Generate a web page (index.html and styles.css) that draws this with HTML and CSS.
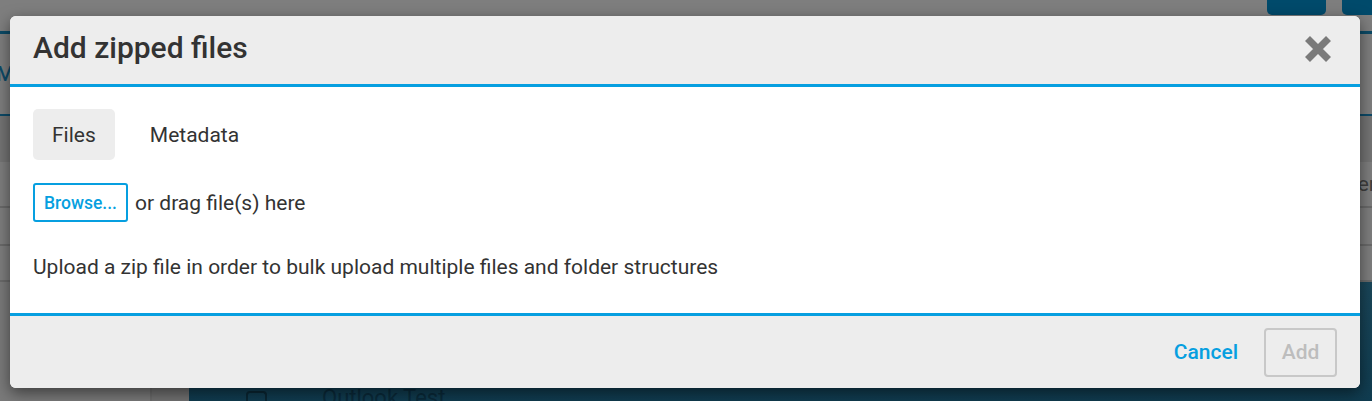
FILE: index.html
```html
<!DOCTYPE html>
<html lang="en">
<head>
<meta charset="utf-8">
<title>Add zipped files</title>
<link rel="stylesheet" href="styles.css">
</head>
<body>
<div class="app">
  <div class="app-top">
    <span class="app-btn app-btn-a"></span>
    <span class="app-btn app-btn-b"></span>
  </div>
  <div class="app-rule"></div>
  <div class="app-tabs"><span class="app-tab">My</span></div>
  <div class="app-line"></div>
  <div class="app-band"></div>
  <div class="app-row"><span class="app-row-text">er</span></div>
  <div class="app-row app-row-b"></div>
  <div class="app-row app-row-c"></div>
  <div class="app-bottom">
    <div class="col-a"></div>
    <div class="col-b"></div>
    <div class="col-c"></div>
    <div class="col-main"><span class="doc-icon"></span><span class="doc-name">Outlook Test</span></div>
  </div>
</div>

<div class="modal" role="dialog" aria-labelledby="modal-title">
  <header class="modal-header">
    <h1 id="modal-title" class="modal-title">Add zipped files</h1>
    <button class="close-btn" aria-label="Close">
      <svg width="26" height="26" viewBox="0 0 26 26" aria-hidden="true">
        <path d="M2.5 2.5 L23.5 23.5 M23.5 2.5 L2.5 23.5" stroke="#7a7a7a" stroke-width="7" stroke-linecap="butt" fill="none"/>
      </svg>
    </button>
  </header>
  <section class="modal-body">
    <nav class="tabs">
      <span class="tab tab-active">Files</span>
      <span class="tab">Metadata</span>
    </nav>
    <div class="drop-row">
      <button class="browse-btn">Browse...</button>
      <span class="drop-text">or drag file(s) here</span>
    </div>
    <p class="hint">Upload a zip file in order to bulk upload multiple files and folder structures</p>
  </section>
  <footer class="modal-footer">
    <button class="cancel-btn">Cancel</button>
    <button class="add-btn" disabled>Add</button>
  </footer>
</div>
</body>
</html>
```

FILE: styles.css
```css
* { box-sizing: border-box; }

html, body {
  margin: 0;
  padding: 0;
  width: 1372px;
  height: 401px;
  overflow: hidden;
}

body {
  background: #7e7e7e;
  font-family: Roboto, "Liberation Sans", sans-serif;
  color: #333;
  position: relative;
}

/* dimmed application behind the dialog */
.app {
  display: flex;
  flex-direction: column;
  height: 401px;
}
.app-top {
  height: 31px;
  display: flex;
  justify-content: flex-end;
  align-items: flex-start;
  gap: 16px;
}
.app-btn {
  display: block;
  height: 15px;
  background: #004a6b;
  border-radius: 0 0 5px 5px;
}
.app-btn-a { width: 59px; }
.app-btn-b { width: 34px; margin-right: -4px; }
.app-rule {
  height: 3px;
  background: #0b4a66;
}
.app-tabs {
  height: 80px;
  display: flex;
  align-items: center;
}
.app-tab {
  margin-left: -4px;
  font-size: 21px;
  font-weight: 500;
  color: #0d4a68;
}
.app-line {
  height: 2px;
  background: #0d4a68;
}
.app-band {
  height: 46px;
  background: #747474;
}
.app-row {
  height: 46px;
  border-bottom: 2px solid #6a6a6a;
  display: flex;
  align-items: center;
  justify-content: flex-end;
}
.app-row-text {
  font-size: 21px;
  color: #3e3e3e;
  margin-right: -4px;
}
.app-row-b { height: 38px; }
.app-row-c { height: 36px; }
.app-bottom {
  flex: 1;
  display: flex;
}
.col-a { width: 150px; background: #7a7a7a; }
.col-b { width: 2px; background: #6c6c6c; }
.col-c { width: 37px; background: #727272; }
.col-main {
  flex: 1;
  background: linear-gradient(#1a4659, #103c50);
  display: flex;
  align-items: flex-end;
  padding-left: 57px;
  gap: 55px;
  overflow: hidden;
}
.doc-icon {
  width: 21px;
  height: 14px;
  margin-bottom: -4px;
  border: 2px solid #0a2734;
  border-bottom: none;
  border-radius: 4px 4px 0 0;
}
.doc-name {
  font-size: 22px;
  color: #0a2a3a;
  line-height: 1;
  margin-bottom: -8px;
}

/* dialog */
.modal {
  position: absolute;
  left: 10px;
  top: 16px;
  width: 1350px;
  background: #fff;
  border-radius: 6px;
  box-shadow: 0 5px 15px rgba(0, 0, 0, 0.5);
  overflow: hidden;
}
.modal-header {
  height: 71px;
  background: #ededed;
  border-bottom: 3px solid #069fe0;
  display: flex;
  align-items: center;
  justify-content: space-between;
  padding: 0 29px 0 23px;
}
.modal-title {
  margin: 0;
  font-size: 30px;
  font-weight: 500;
  color: #333;
  line-height: 1;
  padding-bottom: 4px;
}
.close-btn {
  border: 0;
  padding: 0;
  background: none;
  width: 26px;
  height: 26px;
  display: block;
  margin-top: -3px;
}
.close-btn svg { display: block; }

.modal-body {
  padding: 22px 23px 33px;
}
.tabs {
  display: flex;
  gap: 16px;
}
.tab {
  height: 51px;
  padding: 0 19px;
  display: flex;
  align-items: center;
  font-size: 21px;
  color: #333;
  border-radius: 5px;
}
.tab-active { background: #ededed; }

.drop-row {
  margin-top: 23px;
  display: flex;
  align-items: center;
  gap: 7px;
}
.browse-btn {
  height: 39px;
  width: 95px;
  border: 2px solid #069fe0;
  border-radius: 3px;
  background: #fff;
  color: #069fe0;
  font-family: Roboto, "Liberation Sans", sans-serif;
  font-size: 17.5px;
  font-weight: 500;
  padding: 0;
}
.drop-text {
  font-size: 21px;
  color: #333;
}
.hint {
  margin: 33px 0 0;
  font-size: 21px;
  line-height: 25px;
  color: #333;
}

.modal-footer {
  height: 75px;
  background: #ededed;
  border-top: 3px solid #069fe0;
  display: flex;
  justify-content: flex-end;
  align-items: center;
  padding: 0 23px 0 0;
  gap: 26px;
}
.cancel-btn {
  border: 0;
  background: none;
  padding: 0;
  font-family: Roboto, "Liberation Sans", sans-serif;
  font-size: 21px;
  font-weight: 500;
  color: #069fe0;
}
.add-btn {
  width: 73px;
  height: 49px;
  border: 2px solid #c8c8c8;
  border-radius: 4px;
  background: #ededed;
  font-family: Roboto, "Liberation Sans", sans-serif;
  font-size: 21px;
  font-weight: 500;
  color: #bdbdbd;
  padding: 0;
}
```
